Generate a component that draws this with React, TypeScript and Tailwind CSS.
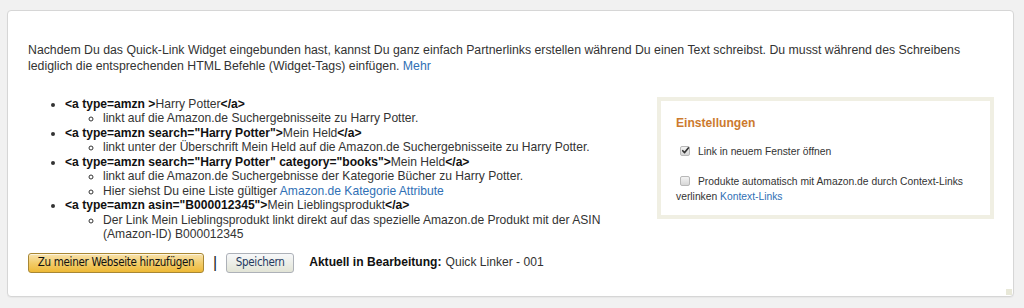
import React from "react";

function Box({ checked }: { checked?: boolean }) {
  return (
    <span className="relative inline-block align-[-1px] w-[10px] h-[10px] rounded-[2px] border border-[#b8b8b8] bg-gradient-to-b from-[#f4f4f4] to-[#d6d6d6] ml-[4px] mr-[8px]">
      {checked && (
        <svg viewBox="0 0 12 12" className="absolute left-[0px] top-[-1px] w-[9px] h-[9px]">
          <path d="M2.3 6.3 L4.8 8.8 L9.8 2.6" fill="none" stroke="#333" strokeWidth="2.2" strokeLinecap="round" strokeLinejoin="round" />
        </svg>
      )}
    </span>
  );
}

export default function App() {
  const tag = "font-bold text-[#111]";
  return (
    <div className="w-[1024px] h-[308px] bg-[#f1f1f1] pt-[10px] pl-[7px] pr-[10px] font-['Liberation_Sans',Arial,sans-serif] text-[#333]">
      <div className="relative h-[287px] bg-white border border-[#d6d6d6] rounded-[4px] pt-[31px] pl-[20px] pr-[19px] shadow-[0_1px_1px_rgba(0,0,0,0.04)]">
        <p className="text-[12.3px] leading-[16px]">
          Nachdem Du das Quick-Link Widget eingebunden hast, kannst Du ganz einfach Partnerlinks erstellen während Du einen Text schreibst. Du musst während des Schreibens lediglich die entsprechenden HTML Befehle (Widget-Tags) einfügen.{" "}
          <span className="text-[#2f6fb5]">Mehr</span>
        </p>
        <div className="flex gap-[16px] mt-[23px]">
          <div className="flex-1">
            <ul className="list-disc pl-[37px] text-[12.1px] leading-[14.45px]">
              <li>
                <span className={tag}>&lt;a type=amzn &gt;</span>Harry Potter<span className={tag}>&lt;/a&gt;</span>
                <ul className="list-[circle] pl-[38px]">
                  <li>linkt auf die Amazon.de Suchergebnisseite zu Harry Potter.</li>
                </ul>
              </li>
              <li>
                <span className={tag}>&lt;a type=amzn search="Harry Potter"&gt;</span>Mein Held<span className={tag}>&lt;/a&gt;</span>
                <ul className="list-[circle] pl-[38px]">
                  <li>linkt unter der Überschrift Mein Held auf die Amazon.de Suchergebnisseite zu Harry Potter.</li>
                </ul>
              </li>
              <li>
                <span className={tag}>&lt;a type=amzn search="Harry Potter" category="books"&gt;</span>Mein Held<span className={tag}>&lt;/a&gt;</span>
                <ul className="list-[circle] pl-[38px]">
                  <li>linkt auf die Amazon.de Suchergebnisse der Kategorie Bücher zu Harry Potter.</li>
                  <li>
                    Hier siehst Du eine Liste gültiger <span className="text-[#2f6fb5]">Amazon.de Kategorie Attribute</span>
                  </li>
                </ul>
              </li>
              <li>
                <span className={tag}>&lt;a type=amzn asin="B000012345"&gt;</span>Mein Lieblingsprodukt<span className={tag}>&lt;/a&gt;</span>
                <ul className="list-[circle] pl-[38px]">
                  <li>Der Link Mein Lieblingsprodukt linkt direkt auf das spezielle Amazon.de Produkt mit der ASIN (Amazon-ID) B000012345</li>
                </ul>
              </li>
            </ul>
            <div className="flex items-center mt-[11px] text-[12.1px]">
              <button className="h-[20px] w-[176px] rounded-[3px] border border-[#a88734] bg-gradient-to-b from-[#f8e3ad] via-[#f2cc6a] to-[#eeb933] font-['DejaVu_Sans_Condensed','Liberation_Sans',sans-serif] text-[11.5px] tracking-[-0.3px] text-[#111] shadow-[inset_0_1px_0_rgba(255,255,255,0.6)]">
                Zu meiner Webseite hinzufügen
              </button>
              <span className="mx-[9px] text-[16px] leading-[16px] text-[#222]">|</span>
              <button className="h-[20px] w-[68px] rounded-[3px] border border-[#adb1b8] bg-gradient-to-b from-[#f7f8fa] to-[#e2e4d6] font-['DejaVu_Sans_Condensed','Liberation_Sans',sans-serif] text-[11.5px] tracking-[-0.3px] text-[#1f3a5f]">
                Speichern
              </button>
              <span className="ml-[15px] font-bold text-[#111]">Aktuell in Bearbeitung:</span>
              <span className="ml-[4px]">Quick Linker - 001</span>
            </div>
          </div>
          <div className="w-[337px] h-[122px] border-[4px] border-[#f0efe3] pt-[14px] pl-[15px] pr-[10px]">
            <div className="text-[12.1px] font-bold text-[#cc7a2e] leading-[16px]">Einstellungen</div>
            <div className="mt-[13px] text-[10.3px] leading-[15px]">
              <Box checked />
              Link in neuem Fenster öffnen
            </div>
            <div className="mt-[15px] text-[10.3px] leading-[15px]">
              <Box />
              Produkte automatisch mit Amazon.de durch Context-Links verlinken{" "}
              <span className="text-[#2f6fb5]">Kontext-Links</span>
            </div>
          </div>
        </div>
        <div className="absolute right-[1px] bottom-[1px] w-[6px] h-[6px] bg-[#e8e8d8]" />
      </div>
    </div>
  );
}
